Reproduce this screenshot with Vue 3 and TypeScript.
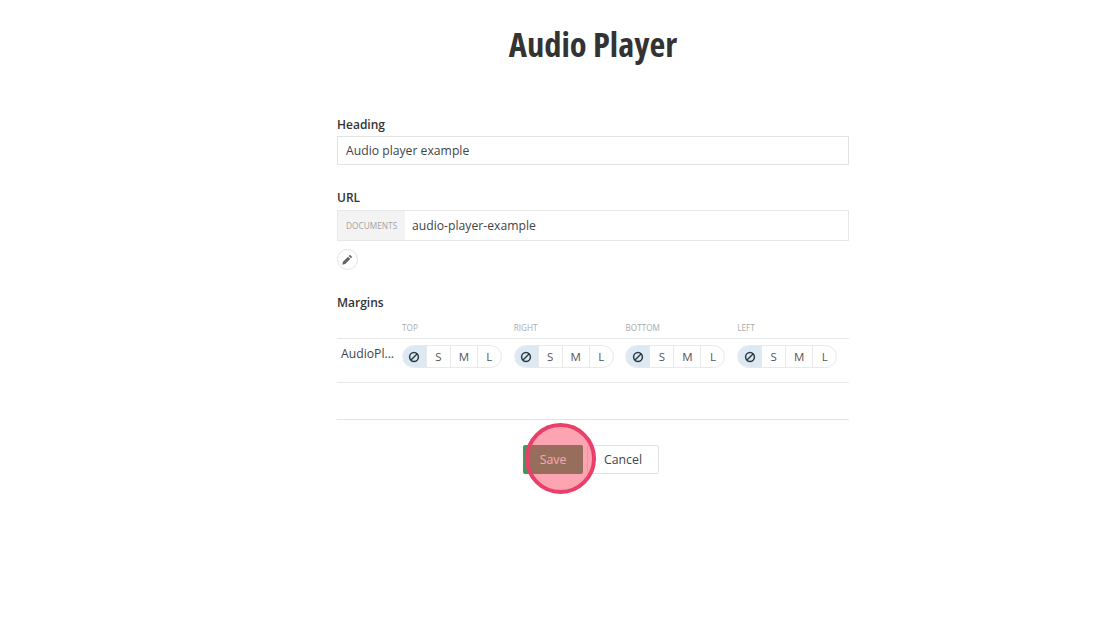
<script setup lang="ts">
const sides = ['TOP', 'RIGHT', 'BOTTOM', 'LEFT']
const sizes = ['S', 'M', 'L']
</script>

<template>
  <div class="page">
    <h1 class="title">Audio Player</h1>
    <form class="form">
      <label class="label">Heading</label>
      <input class="input" value="Audio player example" />

      <label class="label label--url">URL</label>
      <div class="url">
        <span class="url__prefix">DOCUMENTS</span>
        <span class="url__value">audio-player-example</span>
      </div>
      <button class="edit" type="button">
        <svg width="11" height="11" viewBox="0 0 12 12">
          <path d="M8.6.9l2.5 2.5-1.3 1.3-2.5-2.5zM6.6 2.9l2.5 2.5-5.6 5.6-3.2.7.7-3.2z" fill="#666" />
        </svg>
      </button>

      <label class="label label--margins">Margins</label>
      <div class="margins">
        <div class="margins__head">
          <span v-for="side in sides" :key="side" class="margins__side">{{ side }}</span>
        </div>
        <div class="margins__row">
          <span class="margins__name">AudioPl...</span>
          <div v-for="side in sides" :key="side" class="pill-cell">
            <div class="pill">
              <span class="pill__item pill__item--none">
                <svg width="12" height="12" viewBox="0 0 12 12">
                  <circle cx="6" cy="6" r="4.4" fill="none" stroke="#2b3a42" stroke-width="1.5" />
                  <path d="M3 9L9 3" stroke="#2b3a42" stroke-width="1.5" />
                </svg>
              </span>
              <span
                v-for="size in sizes"
                :key="size"
                class="pill__item"
                :class="`pill__item--${size.toLowerCase()}`"
              >{{ size }}</span>
            </div>
          </div>
        </div>
      </div>

      <div class="actions">
        <button class="btn btn--save" type="button">Save</button>
        <button class="btn btn--cancel" type="button">Cancel</button>
      </div>
    </form>
    <div class="highlight"></div>
  </div>
</template>

<style scoped>
.page {
  position: relative;
  width: 1120px;
  height: 626px;
  overflow: hidden;
  background: #fff;
  color: #333;
  font-family: "Open Sans", sans-serif;
}

.title {
  margin: 0;
  padding: 20px 0 0 66px;
  height: 92px;
  box-sizing: border-box;
  text-align: center;
  font-size: 34.5px;
  line-height: 48px;
  font-weight: 700;
  font-stretch: 75%;
  color: #333;
}

.form {
  display: flex;
  flex-direction: column;
  width: 512px;
  margin-left: 337px;
  padding-top: 22px;
}

.label {
  padding-top: 1px;
  font-size: 12px;
  line-height: 20px;
  font-weight: 600;
  color: #333;
  margin-bottom: 1px;
}

.label--url {
  margin-top: 22px;
  margin-bottom: 2px;
}

.label--margins {
  margin-top: 22px;
  margin-bottom: -1px;
}

.input {
  box-sizing: border-box;
  height: 29px;
  padding: 0 8px;
  border: 1px solid #e3e3e3;
  font-family: inherit;
  font-size: 12.2px;
  color: #444;
  outline: none;
}

.url {
  display: flex;
  height: 31px;
  box-sizing: border-box;
  border: 1px solid #e8e8e8;
}

.url__prefix {
  display: flex;
  align-items: center;
  width: 67px;
  box-sizing: border-box;
  padding-left: 8px;
  background: #f3f3f3;
  font-size: 8.3px;
  color: #a3a3a3;
}

.url__value {
  display: flex;
  align-items: center;
  padding-left: 7px;
  font-size: 12.2px;
  color: #444;
}

.edit {
  display: flex;
  align-items: center;
  justify-content: center;
  width: 21px;
  height: 21px;
  margin-top: 8px;
  padding: 0;
  border: 1px solid #e3e3e3;
  border-radius: 50%;
  background: #fff;
}

.margins {
  margin-top: 8px;
}

.margins__head {
  display: flex;
  height: 18px;
  padding-left: 65px;
  border-bottom: 1px solid #e8e8e8;
}

.margins__side {
  width: 112px;
  font-size: 8.2px;
  line-height: 16px;
  color: #aaa;
}

.margins__row {
  display: flex;
  height: 43px;
  border-bottom: 1px solid #e8e8e8;
}

.margins__name {
  width: 65px;
  box-sizing: border-box;
  padding: 6px 0 0 4px;
  font-size: 12.2px;
  line-height: 18px;
  color: #444;
}

.pill-cell {
  width: 112px;
  padding-top: 6px;
}

.pill {
  display: flex;
  width: 100px;
  height: 23px;
  box-sizing: border-box;
  border: 1px solid #e9e9e9;
  border-radius: 12px;
  overflow: hidden;
}

.pill__item {
  display: flex;
  align-items: center;
  justify-content: center;
  width: 24px;
  box-sizing: border-box;
  border-right: 1px solid #e9e9e9;
  font-size: 11.5px;
  color: #555;
}

.pill__item--none {
  background: #dce9f3;
}

.pill__item--m {
  width: 27px;
}

.pill__item--l {
  flex: 1;
  border-right: 0;
}

.actions {
  display: flex;
  justify-content: center;
  gap: 4px;
  margin-top: 36px;
  padding-top: 25px;
  padding-right: 4px;
  border-top: 1px solid #e3e3e3;
}

.btn {
  height: 29px;
  box-sizing: border-box;
  border-radius: 2px;
  font-family: inherit;
  font-size: 12.3px;
}

.btn--save {
  width: 60px;
  border: 0;
  background: #3f9a5c;
  color: #fff;
}

.btn--cancel {
  width: 72px;
  border: 1px solid #e3e3e3;
  background: #fff;
  color: #444;
}

/* click marker over the Save button */
.highlight {
  position: absolute;
  left: 525px;
  top: 423px;
  width: 71px;
  height: 71px;
  box-sizing: border-box;
  border: 4px solid #ea3f69;
  border-radius: 50%;
  background: rgba(250, 61, 94, 0.47);
}
</style>
